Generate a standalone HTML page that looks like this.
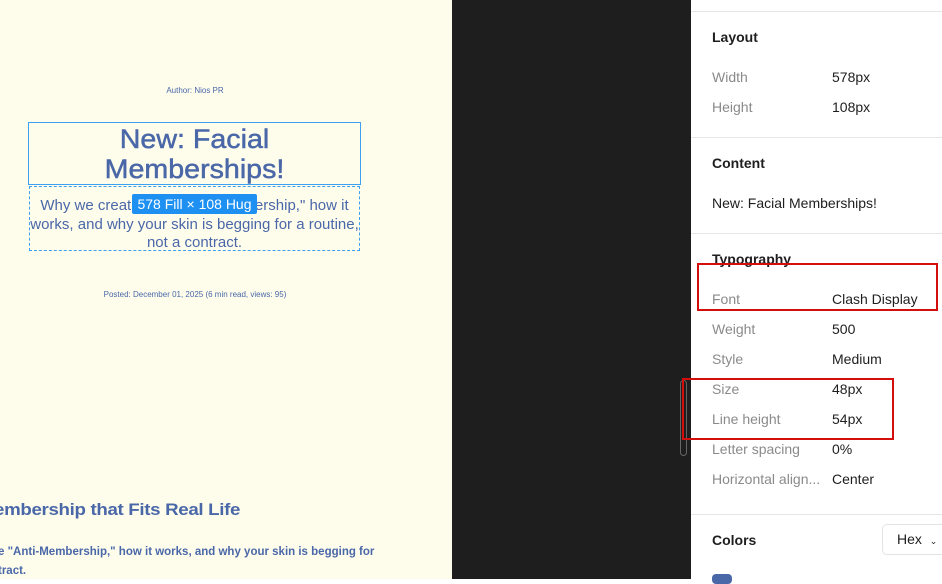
<!DOCTYPE html>
<html><head><style>
*{margin:0;padding:0;box-sizing:border-box}
body{width:942px;height:579px;overflow:hidden;position:relative;font-family:"Liberation Sans",sans-serif;background:#fff}
.a{position:absolute;white-space:nowrap}
.l{background:#fefdec;position:absolute;left:0;top:0;width:452px;height:579px;overflow:hidden}
.d{background:#1e1e1e;position:absolute;left:452px;top:0;width:239px;height:579px}
.r{position:absolute;left:691px;top:0;width:251px;height:579px;background:#fff}
.c{color:#4a67a8}
.lab{color:#8a8a8a;font-size:14px;left:21px}
.val{color:#1e1e1e;font-size:14px;left:141px}
.h{color:#1e1e1e;font-size:14px;font-weight:bold;left:21px}
.sep{position:absolute;left:0;width:251px;height:1px;background:#e6e6e6}
.title{font-size:27px;line-height:30px;text-align:center;transform:scaleX(1.06);transform-origin:center;-webkit-text-stroke:0.5px #4a67a8}
</style></head><body>
<div class="l">
 <div class="a c" style="left:0;width:390px;top:86px;font-size:8px;text-align:center">Author: Nios PR</div>
 <div class="a" style="left:28px;top:122px;width:333px;height:63px;border:1.5px solid #3ea0f0"></div>
 <div class="a c title" style="left:28px;width:333px;top:124px">New: Facial<br>Memberships!</div>
 <div class="a" style="left:29px;top:186px;width:331px;height:65px;border:1px dashed #3ea0f0"></div>
 <div class="a c" style="left:19px;width:351px;top:197px;font-size:15px;line-height:18.7px;text-align:center">Why we created the "Anti-Membership," how it<br>works, and why your skin is begging for a routine,<br>not a contract.</div>
 <div class="a" style="left:132px;top:194px;width:125px;height:20px;background:#1d90f2;color:#fff;font-size:14px;line-height:20px;text-align:center;border-radius:2px">578 Fill × 108 Hug</div>
 <div class="a c" style="left:0;width:390px;top:290px;font-size:8px;text-align:center">Posted: December 01, 2025 (6 min read, views: 95)</div>
 <div class="a c" style="left:-6px;top:500px;font-size:17px;font-weight:bold;letter-spacing:-0.3px;transform:scaleX(1.1);transform-origin:left">embership that Fits Real Life</div>
 <div class="a c" style="left:-2px;top:543px;font-size:11.5px;font-weight:bold;line-height:19px">e "Anti-Membership," how it works, and why your skin is begging for<br>tract.</div>
</div>
<div class="d"></div>
<div class="a" style="left:680px;top:380px;width:7px;height:76px;border:1px solid #666;border-radius:4px"></div>
<div class="r">
 <div class="sep" style="top:11px"></div>
 <div class="a h" style="top:29px">Layout</div>
 <div class="a lab" style="top:69px">Width</div><div class="a val" style="top:69px">578px</div>
 <div class="a lab" style="top:99px">Height</div><div class="a val" style="top:99px">108px</div>
 <div class="sep" style="top:137px"></div>
 <div class="a h" style="top:155px">Content</div>
 <div class="a val" style="left:21px;top:195px">New: Facial Memberships!</div>
 <div class="sep" style="top:233px"></div>
 <div class="a h" style="top:251px">Typography</div>
 <div class="a lab" style="top:291px">Font</div><div class="a val" style="top:291px">Clash Display</div>
 <div class="a lab" style="top:321px">Weight</div><div class="a val" style="top:321px">500</div>
 <div class="a lab" style="top:351px">Style</div><div class="a val" style="top:351px">Medium</div>
 <div class="a lab" style="top:381px">Size</div><div class="a val" style="top:381px">48px</div>
 <div class="a lab" style="top:411px">Line height</div><div class="a val" style="top:411px">54px</div>
 <div class="a lab" style="top:441px">Letter spacing</div><div class="a val" style="top:441px">0%</div>
 <div class="a lab" style="top:471px">Horizontal align...</div><div class="a val" style="top:471px">Center</div>
 <div class="sep" style="top:514px"></div>
 <div class="a h" style="top:532px">Colors</div>
 <div class="a" style="left:191px;top:524px;width:70px;height:31px;border:1px solid #e3e3e3;border-radius:5px;font-size:14px;color:#1e1e1e;padding:6px 0 0 14px">Hex <span style="font-size:9px;margin-left:4px">⌄</span></div>
 <div class="a" style="left:21px;top:574px;width:20px;height:10px;background:#4a67a8;border-radius:4px"></div>
</div>
<div class="a" style="left:697px;top:263px;width:241px;height:48px;border:2px solid #d40d0d"></div>
<div class="a" style="left:682px;top:378px;width:212px;height:62px;border:2px solid #d40d0d"></div>
</body></html>
